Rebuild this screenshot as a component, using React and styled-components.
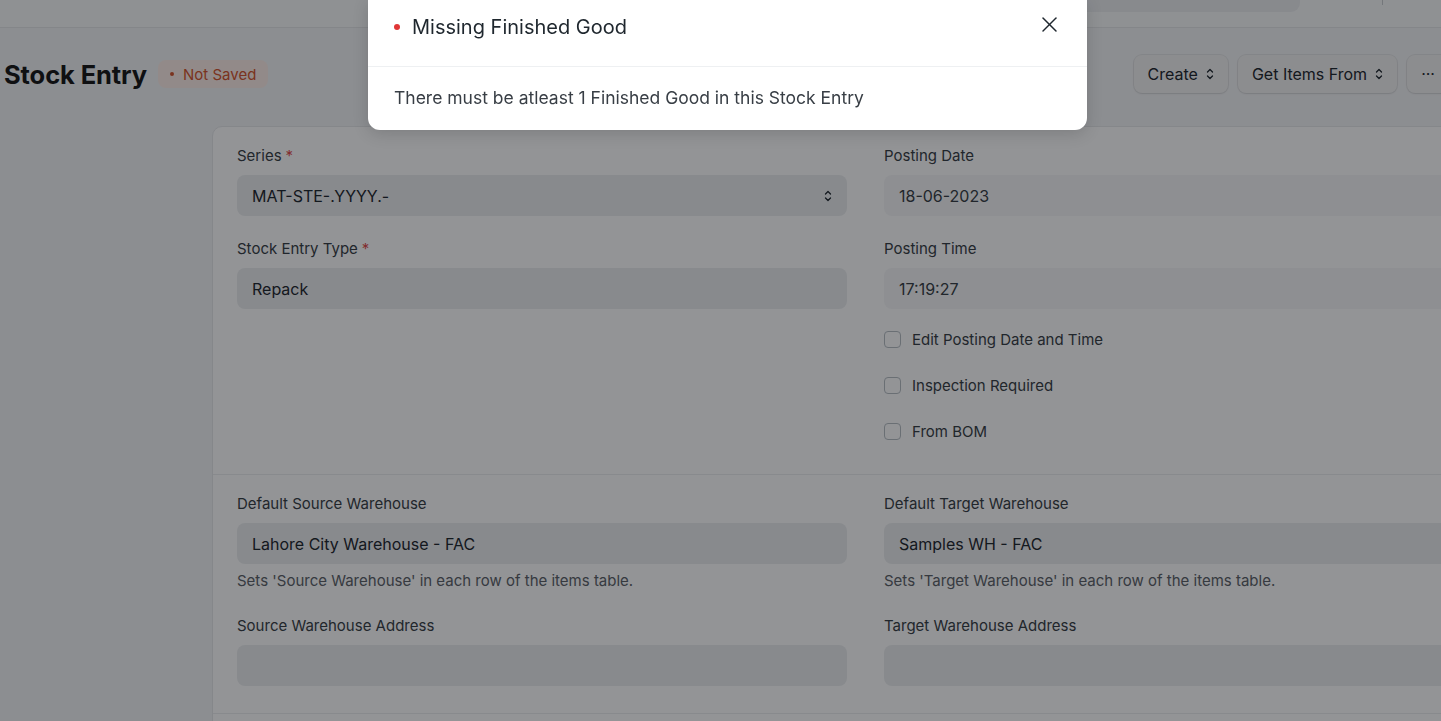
import styled, { createGlobalStyle } from 'styled-components';

const GlobalStyle = createGlobalStyle`
  html, body {
    margin: 0;
    padding: 0;
    overflow: hidden;
    background: #f3f4f6;
    font-family: Inter, "Noto Sans", sans-serif;
    color: #1f272e;
  }
  * {
    box-sizing: border-box;
  }
`;

const Page = styled.div`
  width: 1524px;
  height: 721px;
  background: #f3f4f6;
`;

const Navbar = styled.div`
  height: 28px;
  background: #f8f9fa;
  border-bottom: 1px solid #e4e6e8;
  display: flex;
  align-items: flex-start;
`;

const SearchBox = styled.div`
  margin-left: 880px;
  width: 420px;
  height: 12px;
  background: #eceef0;
  border-radius: 0 0 9px 9px;
`;

const NavDivider = styled.div`
  margin-left: 82px;
  width: 1px;
  height: 5px;
  background: #c9ccd0;
`;

const PageHead = styled.div`
  height: 98px;
  padding: 0 0 0 4px;
  display: flex;
  align-items: center;
  justify-content: space-between;
`;

const TitleArea = styled.div`
  display: flex;
  align-items: center;
  gap: 11px;
  margin-top: -6px;
`;

const Title = styled.h1`
  margin: 0;
  font-size: 25.5px;
  font-weight: 700;
  color: #171717;
  letter-spacing: -0.1px;
`;

const Pill = styled.span`
  display: inline-flex;
  align-items: center;
  gap: 9px;
  height: 28px;
  padding: 0 12px;
  border-radius: 8px;
  background: #fdeee8;
  color: #d4552e;
  font-size: 15px;
  &::before {
    content: '';
    width: 4px;
    height: 4px;
    border-radius: 50%;
    background: currentColor;
  }
`;

const Actions = styled.div`
  display: flex;
  gap: 10px;
  margin-top: -6px;
`;

const Button = styled.button`
  height: 38px;
  padding: 0 14px;
  border: none;
  border-radius: 8px;
  background: ${(p) => (p.$primary ? '#171717' : '#f3f3f3')};
  color: ${(p) => (p.$primary ? '#ffffff' : '#1f272e')};
  box-shadow: 0 0 0 1px rgba(0, 0, 0, 0.06), 0 1px 2px rgba(0, 0, 0, 0.08);
  font-family: inherit;
  font-size: 16px;
  display: inline-flex;
  align-items: center;
  gap: 8px;
`;

const Body = styled.div`
  display: grid;
  grid-template-columns: 212px 1fr;
`;

const Card = styled.div`
  background: #ffffff;
  border: 1px solid #e6e8ea;
  border-radius: 10px;
  height: 640px;
`;

const Section = styled.div`
  display: grid;
  grid-template-columns: 610px 610px;
  column-gap: 37px;
  padding: ${(p) => p.$pad};
  border-bottom: 1px solid #eceef0;
`;

const Column = styled.div`
  display: flex;
  flex-direction: column;
`;

const Field = styled.div`
  display: flex;
  flex-direction: column;
  margin-bottom: ${(p) => p.$mb || '23px'};
`;

const Label = styled.label`
  font-size: 15px;
  line-height: 20px;
  color: #383e45;
  margin-bottom: 9px;
`;

const Req = styled.span`
  color: #e24c4c;
  margin-left: 4px;
`;

const Input = styled.div`
  height: 41px;
  border-radius: 8px;
  background: ${(p) => (p.$readonly ? '#f6f7f8' : '#eceef0')};
  padding: 0 15px;
  display: flex;
  align-items: center;
  justify-content: space-between;
  font-size: 16px;
  color: ${(p) => (p.$readonly ? '#383e45' : '#1f272e')};
`;

const Help = styled.div`
  margin-top: 7px;
  font-size: 15px;
  line-height: 20px;
  color: #5c6268;
`;

const CheckRow = styled.div`
  display: flex;
  align-items: center;
  gap: 11px;
  height: 20px;
  margin-bottom: 26px;
  font-size: 15px;
  color: #383e45;
`;

const Box = styled.span`
  width: 17px;
  height: 17px;
  border-radius: 4px;
  border: 1px solid #b8bec4;
  background: #ffffff;
`;

const Backdrop = styled.div`
  position: fixed;
  inset: 0;
  background: rgba(4, 8, 12, 0.43);
`;

const Modal = styled.div`
  position: fixed;
  top: 0;
  left: 368px;
  width: 719px;
  background: #ffffff;
  border-radius: 0 0 12px 12px;
  box-shadow: 0 4px 16px rgba(0, 0, 0, 0.15);
`;

const ModalHeader = styled.div`
  height: 67px;
  padding: 13px 26px 0 26px;
  display: flex;
  align-items: flex-start;
  justify-content: space-between;
  border-bottom: 1px solid #eef0f2;
`;

const ModalTitle = styled.div`
  display: flex;
  align-items: center;
  gap: 12px;
  font-size: 20px;
  line-height: 28px;
  color: #1f272e;
  &::before {
    content: '';
    width: 6px;
    height: 6px;
    border-radius: 50%;
    background: #e03636;
  }
`;

const Close = styled.div`
  margin-top: -1px;
  width: 24px;
  height: 24px;
  display: flex;
  align-items: center;
  justify-content: center;
`;

const ModalBody = styled.div`
  padding: 19px 26px 20px 26px;
  font-size: 17.5px;
  line-height: 24px;
  color: #383e45;
`;

const Caret = () => (
  <svg width="8" height="14" viewBox="0 0 8 14" fill="none" stroke="currentColor" strokeWidth="1.3" strokeLinecap="round" strokeLinejoin="round">
    <path d="M1.5 5 L4 2.5 L6.5 5" />
    <path d="M1.5 9 L4 11.5 L6.5 9" />
  </svg>
);

const App = () => {
  return (
    <>
      <GlobalStyle />
      <Page>
        <Navbar>
          <SearchBox />
          <NavDivider />
        </Navbar>
        <PageHead>
          <TitleArea>
            <Title>Stock Entry</Title>
            <Pill>Not Saved</Pill>
          </TitleArea>
          <Actions>
            <Button>Create <Caret /></Button>
            <Button>Get Items From <Caret /></Button>
            <Button>···</Button>
            <Button $primary>Save</Button>
          </Actions>
        </PageHead>
        <Body>
          <div />
          <Card>
            <Section $pad="19px 24px 7px">
              <Column>
                <Field>
                  <Label>Series<Req>*</Req></Label>
                  <Input>MAT-STE-.YYYY.- <Caret /></Input>
                </Field>
                <Field>
                  <Label>Stock Entry Type<Req>*</Req></Label>
                  <Input>Repack</Input>
                </Field>
              </Column>
              <Column>
                <Field>
                  <Label>Posting Date</Label>
                  <Input $readonly>18-06-2023</Input>
                </Field>
                <Field $mb="20px">
                  <Label>Posting Time</Label>
                  <Input $readonly>17:19:27</Input>
                </Field>
                <CheckRow><Box />Edit Posting Date and Time</CheckRow>
                <CheckRow><Box />Inspection Required</CheckRow>
                <CheckRow><Box />From BOM</CheckRow>
              </Column>
            </Section>
            <Section $pad="19px 24px 4px">
              <Column>
                <Field $mb="25px">
                  <Label>Default Source Warehouse</Label>
                  <Input>Lahore City Warehouse - FAC</Input>
                  <Help>Sets 'Source Warehouse' in each row of the items table.</Help>
                </Field>
                <Field>
                  <Label>Source Warehouse Address</Label>
                  <Input />
                </Field>
              </Column>
              <Column>
                <Field $mb="25px">
                  <Label>Default Target Warehouse</Label>
                  <Input>Samples WH - FAC</Input>
                  <Help>Sets 'Target Warehouse' in each row of the items table.</Help>
                </Field>
                <Field>
                  <Label>Target Warehouse Address</Label>
                  <Input />
                </Field>
              </Column>
            </Section>
          </Card>
        </Body>
      </Page>
      <Backdrop />
      <Modal>
        <ModalHeader>
          <ModalTitle>Missing Finished Good</ModalTitle>
          <Close>
            <svg width="17" height="17" viewBox="0 0 17 17" fill="none" stroke="#1f272e" strokeWidth="1.5" strokeLinecap="round">
              <path d="M2 2 L15 15" />
              <path d="M15 2 L2 15" />
            </svg>
          </Close>
        </ModalHeader>
        <ModalBody>There must be atleast 1 Finished Good in this Stock Entry</ModalBody>
      </Modal>
    </>
  );
};

export default App;
